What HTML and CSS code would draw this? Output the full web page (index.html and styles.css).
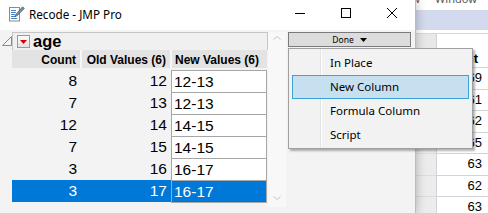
FILE: index.html
```html
<!DOCTYPE html>
<html>
<head>
<meta charset="utf-8">
<link rel="stylesheet" href="styles.css">
</head>
<body>
<div class="screen">
  <div class="recode">
    <div class="titlebar">
      <svg class="app-icon" width="16" height="16" viewBox="0 0 16 16">
        <rect x="0.5" y="1.5" width="10" height="13.5" fill="#fff" stroke="#8c8c8c"/>
        <path d="M2 4.5h5M2 6.5h5M2 8.5h4M2 10.5h5M2 12.5h6" stroke="#4a86c8" stroke-width="1"/>
        <path d="M13.6 0.8 L15.3 2.5 L8.2 9.6 L6 10.6 L6.9 8.4 Z" fill="#7d8fa6" stroke="#4c5b6c" stroke-width="0.8" stroke-linejoin="round"/>
      </svg>
      <span class="title">Recode - JMP Pro</span>
      <div class="controls">
        <div class="ctl"><svg width="10" height="10" viewBox="0 0 10 10"><path d="M0 5.5h10" stroke="#000" stroke-width="1"/></svg></div>
        <div class="ctl"><svg width="10" height="10" viewBox="0 0 10 10"><rect x="0.5" y="0.5" width="9" height="9" fill="none" stroke="#000"/></svg></div>
        <div class="ctl"><svg width="10" height="10" viewBox="0 0 10 10"><path d="M0 0L10 10M10 0L0 10" stroke="#000" stroke-width="1"/></svg></div>
      </div>
    </div>
    <div class="body">
      <div class="outline">
        <div class="outline-head">
          <svg class="disclose" width="12" height="18" viewBox="0 0 12 18">
            <path d="M2.5 13.5 L11.5 4.5 L11.5 13.5 Z" fill="#f4f4f4" stroke="#8a8a8a" stroke-width="1"/>
          </svg>
          <div class="outline-bar">
            <span class="redbtn"><svg width="7" height="4" viewBox="0 0 7 4"><path d="M0 0H7L3.5 4Z" fill="#d40000"/></svg></span>
            <span class="otitle">age</span>
          </div>
        </div>
        <div class="thead">
          <div class="th th-count">Count</div>
          <div class="th th-old">Old Values (6)</div>
          <div class="th th-new">New Values (6)</div>
        </div>
        <div class="tbody">
          <div class="td num c1">8</div><div class="td num c2">12</div><div class="td nv">12-13</div>
          <div class="td num c1">7</div><div class="td num c2">13</div><div class="td nv">12-13</div>
          <div class="td num c1">12</div><div class="td num c2">14</div><div class="td nv">14-15</div>
          <div class="td num c1">7</div><div class="td num c2">15</div><div class="td nv">14-15</div>
          <div class="td num c1">3</div><div class="td num c2">16</div><div class="td nv">16-17</div>
          <div class="td num c1 sel">3</div><div class="td num c2 sel">17</div><div class="td nv sel last">16-17</div>
        </div>
      </div>
      <div class="vscroll">
        <svg width="8" height="4" viewBox="0 0 8 4"><path d="M0.5 3.5L4 0.5L7.5 3.5" fill="none" stroke="#c4c4c4"/></svg>
        <svg width="8" height="4" viewBox="0 0 8 4"><path d="M0.5 0.5L4 3.5L7.5 0.5" fill="none" stroke="#c4c4c4"/></svg>
      </div>
      <div class="side">
        <div class="done"><span>Done</span><svg width="7" height="4" viewBox="0 0 7 4"><path d="M0 0H7L3.5 4Z" fill="#000"/></svg></div>
      </div>
    </div>
    <div class="menu">
      <div class="mi">In Place</div>
      <div class="mi hot">New Column</div>
      <div class="mi">Formula Column</div>
      <div class="mi">Script</div>
    </div>
  </div>
  <div class="bgwin">
    <div class="bg-menu"><span class="m1">View</span><span class="m2">Window</span></div>
    <div class="bg-band"></div>
    <div class="bg-gap"></div>
    <div class="bg-grid">
      <div class="rh hdr"></div><div class="dc hdr">height</div>
      <div class="rh"></div><div class="dc">69</div>
      <div class="rh"></div><div class="dc">61</div>
      <div class="rh"></div><div class="dc">62</div>
      <div class="rh"></div><div class="dc">65</div>
      <div class="rh"></div><div class="dc">63</div>
      <div class="rh"></div><div class="dc">62</div>
      <div class="rh"></div><div class="dc">63</div>
    </div>
  </div>
</div>
</body>
</html>
```

FILE: styles.css
```css
html, body {
  margin: 0;
  padding: 0;
  background: #fff;
}
.screen {
  width: 488px;
  height: 213px;
  overflow: hidden;
  display: flex;
}
.recode {
  position: relative;
  z-index: 2;
  width: 416px;
  flex: none;
  box-sizing: border-box;
  border-right: 1px solid #9dc3ec;
  background: #f3f3f3;
  display: flex;
  flex-direction: column;
  box-shadow: 0 0 10px rgba(0, 0, 0, 0.28);
}
.titlebar {
  height: 30px;
  flex: none;
  background: #fff;
  display: flex;
  align-items: flex-start;
}
.app-icon {
  margin: 6px 0 0 9px;
  flex: none;
}
.title {
  margin: 6px 0 0 4px;
  font-family: "Noto Sans", sans-serif;
  font-size: 11.7px;
  line-height: 16px;
  color: #000;
  white-space: nowrap;
}
.controls {
  margin-left: auto;
  display: flex;
}
.ctl {
  width: 46px;
  height: 26px;
  display: flex;
  align-items: center;
  justify-content: center;
}
.ctl svg { display: block; }
.body {
  flex: 1;
  display: flex;
  align-items: flex-start;
}
.outline {
  width: 268px;
  flex: none;
  padding-top: 2px;
}
.outline-head {
  display: flex;
  height: 18px;
}
.disclose { display: block; flex: none; }
.outline-bar {
  width: 256px;
  box-sizing: border-box;
  height: 18px;
  border: 1px solid #c6c6c6;
  border-bottom: none;
  background: #f0f0f0;
  display: flex;
  align-items: center;
  padding-left: 4px;
}
.redbtn {
  width: 13px;
  height: 13px;
  box-sizing: border-box;
  border: 1px solid #9a9a9a;
  background: linear-gradient(#fdfdfd, #e2e2e2);
  display: flex;
  align-items: center;
  justify-content: center;
  flex: none;
}
.redbtn svg { display: block; }
.otitle {
  margin-left: 3px;
  font-family: "Liberation Sans", Arial, sans-serif;
  font-weight: bold;
  font-size: 16.5px;
  line-height: 17px;
  color: #000;
}
.thead, .tbody {
  margin-left: 12px;
  display: grid;
  grid-template-columns: 69px 90px 96px;
}
.th {
  height: 18px;
  box-sizing: border-box;
  padding-top: 3px;
  background: #e3e3e3;
  font-family: "Liberation Sans", Arial, sans-serif;
  font-weight: bold;
  font-size: 12px;
  line-height: 15px;
  color: #000;
  white-space: nowrap;
  overflow: hidden;
}
.th-count {
  text-align: right;
  padding-right: 4px;
  border-right: 1px solid #f6f6f6;
}
.th-old {
  text-align: right;
  padding-right: 4px;
  border-left: 1px solid #f6f6f6;
  border-right: 1px solid #f6f6f6;
}
.th-new {
  padding-left: 3px;
  border-left: 1px solid #f6f6f6;
}
.tbody {
  margin-top: 2px;
  grid-auto-rows: 22px;
}
.td {
  font-family: "Liberation Sans", Arial, sans-serif;
  font-size: 15.5px;
  line-height: 21px;
  color: #000;
  white-space: nowrap;
}
.num { text-align: right; }
.c1 { padding-right: 4px; }
.c2 { padding-right: 4px; }
.nv {
  background: #fff;
  border-left: 1px solid #a6a6a6;
  border-right: 1px solid #a6a6a6;
  border-top: 1px solid #a6a6a6;
  padding-left: 2px;
}
.sel {
  background: #0078d7;
  color: #fff;
}
.last {
  box-shadow: 0 1px 0 #a6a6a6;
}
.vscroll {
  width: 18px;
  flex: none;
  margin-top: 2px;
  height: 175px;
  box-sizing: border-box;
  padding: 4px 0 7px;
  background: #f8f8f8;
  display: flex;
  flex-direction: column;
  justify-content: space-between;
  align-items: center;
}
.vscroll svg { display: block; }
.side {
  flex: 1;
  padding: 2px 4px 0 2px;
}
.done {
  height: 15px;
  box-sizing: border-box;
  border: 1px solid #7a7a7a;
  background: #dcdcdc;
  display: flex;
  align-items: center;
  justify-content: center;
  gap: 6px;
  font-family: "Noto Sans", sans-serif;
  font-size: 8.5px;
  line-height: 12px;
  color: #000;
}
.done svg { display: block; }
.menu {
  position: absolute;
  left: 288px;
  top: 48px;
  width: 185px;
  height: 101px;
  box-sizing: border-box;
  border: 1px solid #a0a0a0;
  padding: 2px 0 1px;
  background:
    linear-gradient(to right, transparent 31px, #e2e2e2 31px, #e2e2e2 32px, #ffffff 32px, #ffffff 33px, transparent 33px),
    #f2f2f2;
  box-shadow: 2px 2px 2px rgba(0, 0, 0, 0.3);
  z-index: 5;
}
.mi {
  height: 24px;
  box-sizing: border-box;
  margin: 0 3px;
  border: 1px solid transparent;
  padding-left: 37px;
  font-family: "Noto Sans", sans-serif;
  font-size: 11.5px;
  line-height: 22px;
  color: #000;
  white-space: nowrap;
}
.mi.hot {
  background: #c6e0f0;
  border-color: #3ea2da;
}
.bgwin {
  flex: 1;
  min-width: 0;
  background: #fff;
  display: flex;
  flex-direction: column;
  overflow: hidden;
}
.bg-menu {
  height: 10px;
  flex: none;
  overflow: hidden;
  white-space: nowrap;
  font-family: "Noto Sans", sans-serif;
  font-size: 11px;
  line-height: 11px;
  color: #555;
}
.bg-menu .m1 {
  display: inline-block;
  margin: -7px 0 0 -20px;
  vertical-align: top;
}
.bg-menu .m2 {
  display: inline-block;
  margin: -7px 0 0 15px;
  vertical-align: top;
}
.bg-band {
  height: 20px;
  flex: none;
  background: #d4daee;
}
.bg-gap {
  height: 3px;
  flex: none;
}
.bg-grid {
  display: grid;
  grid-template-columns: 20px 1fr;
  grid-template-rows: 34px;
  grid-auto-rows: 21.5px;
  border-top: 1px solid #d6d6de;
}
.rh {
  background: #ececec;
  border-bottom: 1px solid #dcdce2;
}
.dc {
  border-left: 1px solid #d2d2dc;
  border-bottom: 1px solid #d2d2dc;
  text-align: right;
  padding-right: 6px;
  font-family: "Liberation Sans", Arial, sans-serif;
  font-size: 13px;
  line-height: 20px;
  color: #000;
}
.dc.hdr {
  font-weight: bold;
  padding-right: 10px;
  display: flex;
  align-items: flex-end;
  justify-content: flex-end;
  line-height: 15px;
  padding-bottom: 1px;
}
.rh.hdr {
  background: #e8e8e8;
}
```
